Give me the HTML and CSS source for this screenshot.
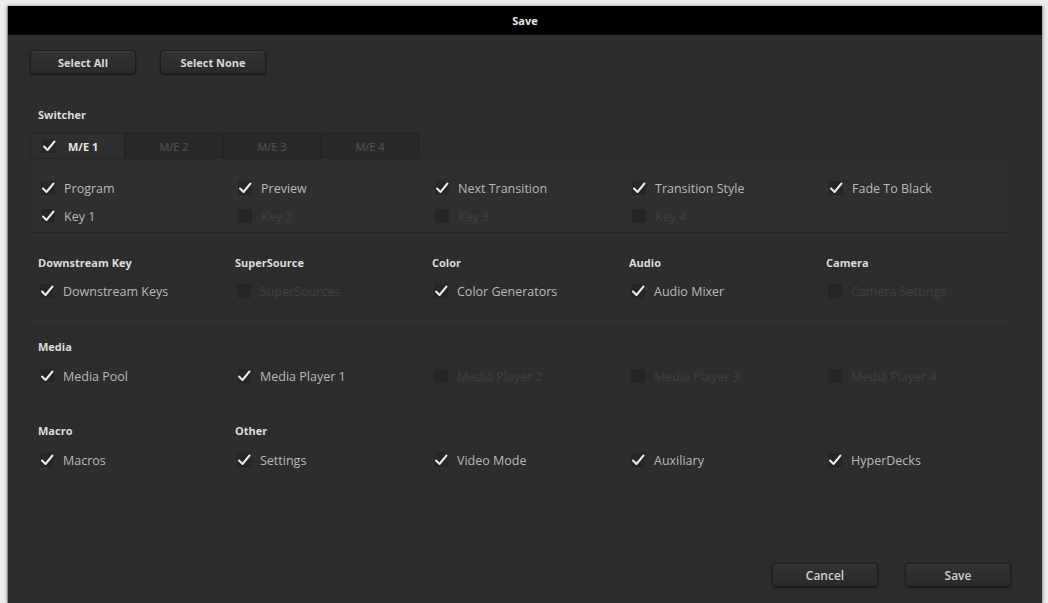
FILE: index.html
```html
<!DOCTYPE html>
<html lang="en">
<head>
    <meta charset="UTF-8">
    <title>Save</title>
    <link rel="stylesheet" href="styles.css">
</head>
<body>
    <div class="dialog">
        <div class="titulo">Save</div>
        <div class="conteudo">
            <div class="botoesTopo">
                <button class="botao">Select All</button>
                <button class="botao">Select None</button>
            </div>

            <div class="secaoTitulo switcher">Switcher</div>
            <div class="abas">
                <div class="aba ativa"><span class="caixa"><svg viewBox="0 0 14 14"><path d="M2 7.5 L5.5 11 L12.5 2.5"/></svg></span>M/E 1</div>
                <div class="aba">M/E 2</div>
                <div class="aba">M/E 3</div>
                <div class="aba">M/E 4</div>
            </div>
            <div class="painel">
                <div class="grade">
                    <label class="item"><span class="caixa"><svg viewBox="0 0 14 14"><path d="M2 7.5 L5.5 11 L12.5 2.5"/></svg></span>Program</label>
                    <label class="item"><span class="caixa"><svg viewBox="0 0 14 14"><path d="M2 7.5 L5.5 11 L12.5 2.5"/></svg></span>Preview</label>
                    <label class="item"><span class="caixa"><svg viewBox="0 0 14 14"><path d="M2 7.5 L5.5 11 L12.5 2.5"/></svg></span>Next Transition</label>
                    <label class="item"><span class="caixa"><svg viewBox="0 0 14 14"><path d="M2 7.5 L5.5 11 L12.5 2.5"/></svg></span>Transition Style</label>
                    <label class="item"><span class="caixa"><svg viewBox="0 0 14 14"><path d="M2 7.5 L5.5 11 L12.5 2.5"/></svg></span>Fade To Black</label>
                    <label class="item"><span class="caixa"><svg viewBox="0 0 14 14"><path d="M2 7.5 L5.5 11 L12.5 2.5"/></svg></span>Key 1</label>
                    <label class="item off"><span class="caixa"></span>Key 2</label>
                    <label class="item off"><span class="caixa"></span>Key 3</label>
                    <label class="item off"><span class="caixa"></span>Key 4</label>
                </div>
            </div>

            <div class="grade bloco primeiro">
                <div class="secaoTitulo">Downstream Key</div>
                <div class="secaoTitulo">SuperSource</div>
                <div class="secaoTitulo">Color</div>
                <div class="secaoTitulo">Audio</div>
                <div class="secaoTitulo">Camera</div>
                <label class="item"><span class="caixa"><svg viewBox="0 0 14 14"><path d="M2 7.5 L5.5 11 L12.5 2.5"/></svg></span>Downstream Keys</label>
                <label class="item off"><span class="caixa"></span>SuperSources</label>
                <label class="item"><span class="caixa"><svg viewBox="0 0 14 14"><path d="M2 7.5 L5.5 11 L12.5 2.5"/></svg></span>Color Generators</label>
                <label class="item"><span class="caixa"><svg viewBox="0 0 14 14"><path d="M2 7.5 L5.5 11 L12.5 2.5"/></svg></span>Audio Mixer</label>
                <label class="item off"><span class="caixa"></span>Camera Settings</label>
            </div>

            <div class="separador"></div>

            <div class="grade bloco">
                <div class="secaoTitulo">Media</div>
                <div class="secaoTitulo"></div>
                <div class="secaoTitulo"></div>
                <div class="secaoTitulo"></div>
                <div class="secaoTitulo"></div>
                <label class="item"><span class="caixa"><svg viewBox="0 0 14 14"><path d="M2 7.5 L5.5 11 L12.5 2.5"/></svg></span>Media Pool</label>
                <label class="item"><span class="caixa"><svg viewBox="0 0 14 14"><path d="M2 7.5 L5.5 11 L12.5 2.5"/></svg></span>Media Player 1</label>
                <label class="item off"><span class="caixa"></span>Media Player 2</label>
                <label class="item off"><span class="caixa"></span>Media Player 3</label>
                <label class="item off"><span class="caixa"></span>Media Player 4</label>
            </div>

            <div class="grade bloco ultimo">
                <div class="secaoTitulo">Macro</div>
                <div class="secaoTitulo">Other</div>
                <div class="secaoTitulo"></div>
                <div class="secaoTitulo"></div>
                <div class="secaoTitulo"></div>
                <label class="item"><span class="caixa"><svg viewBox="0 0 14 14"><path d="M2 7.5 L5.5 11 L12.5 2.5"/></svg></span>Macros</label>
                <label class="item"><span class="caixa"><svg viewBox="0 0 14 14"><path d="M2 7.5 L5.5 11 L12.5 2.5"/></svg></span>Settings</label>
                <label class="item"><span class="caixa"><svg viewBox="0 0 14 14"><path d="M2 7.5 L5.5 11 L12.5 2.5"/></svg></span>Video Mode</label>
                <label class="item"><span class="caixa"><svg viewBox="0 0 14 14"><path d="M2 7.5 L5.5 11 L12.5 2.5"/></svg></span>Auxiliary</label>
                <label class="item"><span class="caixa"><svg viewBox="0 0 14 14"><path d="M2 7.5 L5.5 11 L12.5 2.5"/></svg></span>HyperDecks</label>
            </div>

            <div class="botoesFim">
                <button class="botao normal">Cancel</button>
                <button class="botao normal">Save</button>
            </div>
        </div>
    </div>
</body>
</html>
```

FILE: styles.css
```css
body{
    margin: 0;
    padding: 0;
    background-color: #ececec;
    font-family: "Open Sans", "DejaVu Sans", sans-serif;
    height: 603px;
    overflow: hidden;
}
.dialog{
    margin: 6px 5px 0 7px;
    height: 597px;
    background-color: #2d2d2d;
    border-left: 1px solid #8a8a8a;
    border-right: 1px solid #b0b0b0;
    box-shadow: 0 0 3px rgba(0, 0, 0, 0.4);
    display: flex;
    flex-direction: column;
}
.titulo{
    height: 29px;
    background-color: #000;
    color: #e6e6e6;
    font-size: 11px;
    font-weight: bold;
    display: flex;
    align-items: center;
    justify-content: center;
}
.conteudo{
    flex: 1;
    display: flex;
    flex-direction: column;
    padding: 15px 31px 16px 22px;
}
.botao{
    font-family: inherit;
    font-size: 11px;
    font-weight: bold;
    color: #d8d8d8;
    background: linear-gradient(#333, #2a2a2a);
    border: 1px solid #1c1c1c;
    border-radius: 4px;
    box-shadow: 0 1px 2px rgba(0, 0, 0, 0.5), inset 0 1px 0 rgba(255, 255, 255, 0.05);
    width: 106px;
    height: 24px;
    padding: 0;
}
.botao.normal{
    font-weight: 600;
    font-size: 12px;
    color: #cfcfcf;
}
.botoesTopo{
    display: flex;
    gap: 24px;
}
.secaoTitulo{
    font-size: 11px;
    font-weight: bold;
    color: #dcdcdc;
    height: 16px;
    line-height: 16px;
    padding-left: 8px;
}
.switcher{
    margin-top: 33px;
}
.abas{
    display: flex;
    margin-top: 10px;
    height: 25px;
}
.aba{
    width: 98px;
    box-sizing: border-box;
    background-color: #292929;
    border: 1px solid #242424;
    border-bottom: 0;
    color: #555;
    font-size: 11px;
    display: flex;
    align-items: center;
    justify-content: center;
}
.aba.ativa{
    width: 95px;
    background-color: #2f2f2f;
    color: #e6e6e6;
    font-weight: bold;
    justify-content: flex-start;
    padding-left: 11px;
    gap: 12px;
}
.painel{
    background-color: #2f2f2f;
    border: 1px solid #262626;
    padding: 18px 0 5px 0;
    width: 980px;
    box-sizing: border-box;
}
.grade{
    display: grid;
    grid-template-columns: repeat(5, 197px);
    row-gap: 6px;
}
.item{
    display: flex;
    align-items: center;
    gap: 9px;
    height: 22px;
    padding-left: 10px;
    font-size: 12.5px;
    color: #b8b8b8;
}
.item.off{
    color: #3f3f3f;
}
.caixa{
    width: 14px;
    height: 14px;
    background-color: #262626;
    border-radius: 2px;
    display: inline-block;
    flex-shrink: 0;
}
.caixa svg{
    width: 14px;
    height: 14px;
    display: block;
}
.caixa path{
    fill: none;
    stroke: #ededed;
    stroke-width: 2;
    stroke-linecap: round;
    stroke-linejoin: round;
}
.bloco{
    row-gap: 10px;
    margin-top: 36px;
}
.bloco.primeiro{
    margin-top: 22px;
    row-gap: 9px;
}
.separador{
    height: 1px;
    background-color: #363636;
    width: 980px;
    margin-top: 19px;
}
.separador + .bloco{
    margin-top: 17px;
}
.botoesFim{
    margin-top: auto;
    display: flex;
    justify-content: flex-end;
    gap: 27px;
}
```
